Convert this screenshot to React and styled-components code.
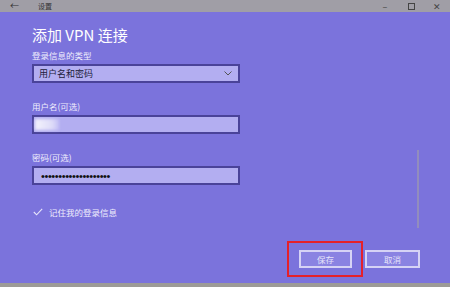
import styled, { createGlobalStyle } from "styled-components";

const GlobalStyle = createGlobalStyle`
  html, body {
    margin: 0;
    padding: 0;
  }
  body {
    width: 450px;
    height: 287px;
    overflow: hidden;
    font-family: "Noto Sans CJK SC", "Noto Sans", sans-serif;
  }
`;

const Window = styled.div`
  width: 450px;
  height: 287px;
  display: flex;
  flex-direction: column;
  background: #7b73dc;
`;

const TitleBar = styled.div`
  height: 12px;
  background: #a09ea6;
  display: flex;
  align-items: center;
  color: #333;
  font-size: 7px;
`;

const BackArrow = styled.span`
  width: 12px;
  margin-left: 10px;
  font-size: 9px;
  line-height: 12px;
`;

const WindowTitle = styled.span`
  margin-left: 16px;
  flex: 1;
`;

const WinControl = styled.span`
  width: 26px;
  display: flex;
  justify-content: center;
  align-items: center;
  color: #444;
  font-size: 9px;
`;

const Main = styled.div`
  flex: 1;
  position: relative;
  display: flex;
  flex-direction: column;
  padding-left: 32px;
`;

const Heading = styled.h1`
  margin: 13px 0 0;
  font-size: 15px;
  line-height: 20px;
  font-weight: 400;
  color: #fff;
`;

const Label = styled.div`
  margin-top: ${(p) => p.$top}px;
  font-size: 8.5px;
  line-height: 10px;
  color: #f0eefc;
`;

const Field = styled.div`
  margin-top: 4px;
  width: 201px;
  height: 15px;
  border: 2px solid #4a4399;
  background: #b3aef1;
  display: flex;
  align-items: center;
  padding: 0 0 0 3px;
  font-size: 9px;
  color: #1c1a3a;
`;

const SelectText = styled.span`
  flex: 1;
  padding-left: 2px;
`;

const Chevron = styled.svg`
  width: 8px;
  height: 5px;
  margin-right: 6px;
`;

const Blurred = styled.span`
  width: 24px;
  height: 11px;
  margin-left: -2px;
  background: linear-gradient(90deg, #f4f3fc 0%, #dedcf8 70%, #c3bff4 100%);
  filter: blur(1.5px);
`;

const Dots = styled.span`
  padding-left: 4px;
  font-family: "Liberation Sans", Arial, sans-serif;
  font-size: 11px;
  letter-spacing: -0.4px;
  color: #111;
`;

const Remember = styled.div`
  margin-top: 21px;
  display: flex;
  align-items: center;
  gap: 6px;
  font-size: 8.5px;
  color: #f0eefc;
`;

const CheckMark = styled.svg`
  width: 10px;
  height: 8px;
  margin-left: 1px;
`;

const ScrollIndicator = styled.div`
  position: absolute;
  left: 417px;
  top: 138px;
  width: 2px;
  height: 78px;
  background: #928dbd;
`;

const Footer = styled.div`
  margin-top: auto;
  margin-bottom: 6px;
  display: flex;
  justify-content: flex-end;
  align-items: center;
  padding-right: 30px;
`;

const Highlight = styled.div`
  border: 2px solid #e5202a;
  padding: 7px 9px 7px 10px;
`;

const Button = styled.button`
  width: ${(p) => p.$w}px;
  height: 18px;
  margin-left: ${(p) => p.$ml || 0}px;
  border: 2px solid #d6d3f5;
  background: #8a83e2;
  color: #e6e3fa;
  font-family: "Noto Sans CJK SC", "Noto Sans", sans-serif;
  font-size: 8.5px;
  padding: 0;
  display: flex;
  align-items: center;
  justify-content: center;
`;

const BottomStrip = styled.div`
  height: 4px;
  background: #9d9b97;
`;

export default function App() {
  return (
    <>
      <GlobalStyle />
      <Window>
        <TitleBar>
          <BackArrow>←</BackArrow>
          <WindowTitle>设置</WindowTitle>
          <WinControl>–</WinControl>
          <WinControl>
            <svg width="7" height="7" viewBox="0 0 7 7">
              <rect x="0.5" y="0.5" width="6" height="6" fill="none" stroke="#444" />
            </svg>
          </WinControl>
          <WinControl>✕</WinControl>
        </TitleBar>
        <Main>
          <Heading>添加 VPN 连接</Heading>
          <Label $top={5}>登录信息的类型</Label>
          <Field>
            <SelectText>用户名和密码</SelectText>
            <Chevron viewBox="0 0 8 5">
              <path d="M0.5 0.5 L4 4 L7.5 0.5" fill="none" stroke="#555" strokeWidth="1" />
            </Chevron>
          </Field>
          <Label $top={18}>用户名(可选)</Label>
          <Field>
            <Blurred />
          </Field>
          <Label $top={18}>密码(可选)</Label>
          <Field>
            <Dots>••••••••••••••••••••</Dots>
          </Field>
          <Remember>
            <CheckMark viewBox="0 0 10 8">
              <path d="M0.8 4 L3.6 6.8 L9.2 0.8" fill="none" stroke="#e8e6fb" strokeWidth="1.1" />
            </CheckMark>
            记住我的登录信息
          </Remember>
          <ScrollIndicator />
          <Footer>
            <Highlight>
              <Button $w={53}>保存</Button>
            </Highlight>
            <Button $w={55} $ml={2}>取消</Button>
          </Footer>
        </Main>
        <BottomStrip />
      </Window>
    </>
  );
}
